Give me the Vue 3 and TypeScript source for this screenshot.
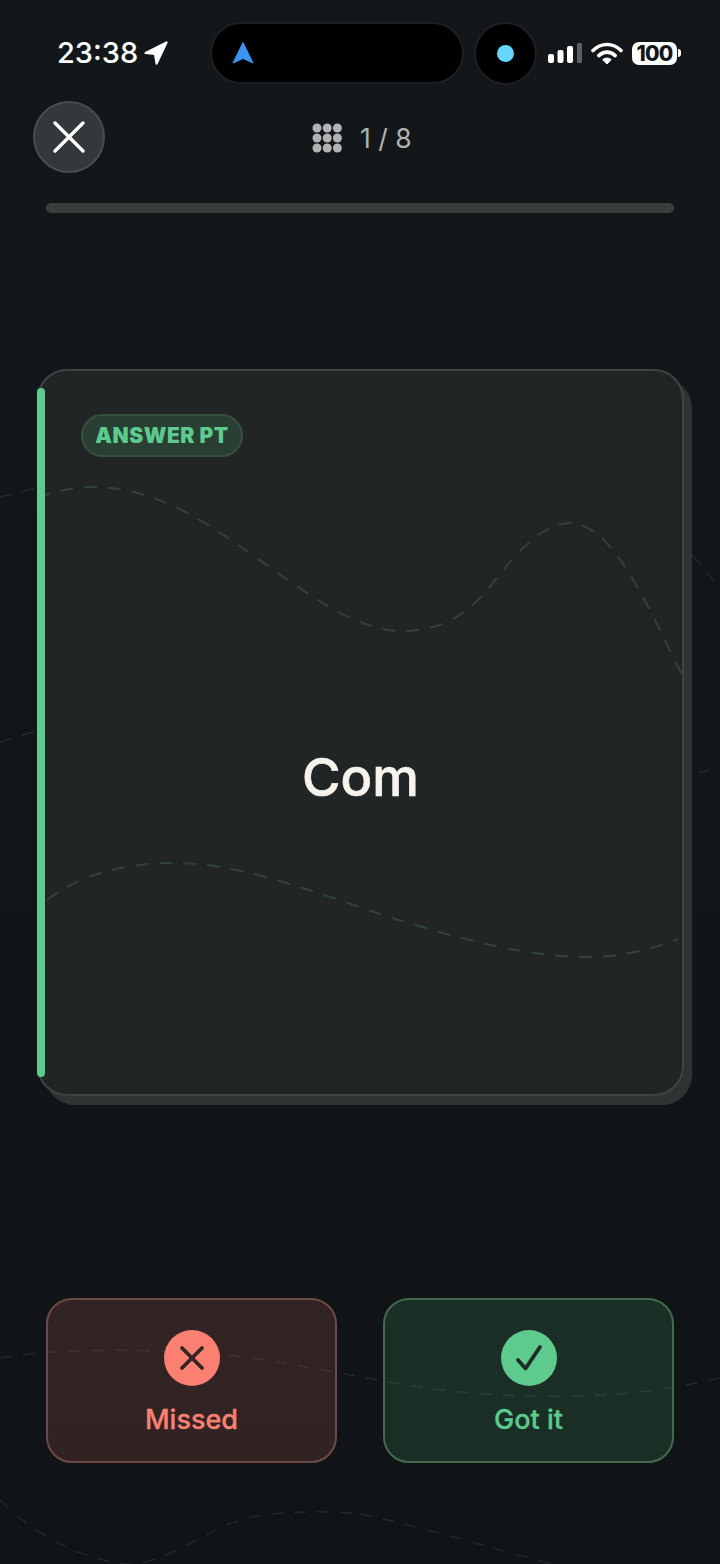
<script setup lang="ts">
import { ref } from "vue";

// dots of the little deck icon next to the counter
const dots = [0, 1, 2].flatMap((row) =>
  [0, 1, 2].map((col) => ({ id: `${row}-${col}`, cx: 5 + col * 10.2, cy: 5 + row * 10 }))
);

const current = ref(1);
const total = ref(8);
</script>

<template>
  <div class="page">
    <svg class="bg-lines" viewBox="0 0 720 1564" width="720" height="1564" fill="none">
      <path d="M0 497C14 494 26 490 40 488" />
      <path d="M692 555C702 565 711 577 720 590" />
      <path d="M0 742C12 738 25 734 38 731" />
      <path d="M698 773C705 771 712 769 720 768" />
      <path d="M0 1358C60 1348 130 1350 192 1352C260 1356 330 1372 400 1384C470 1396 560 1400 640 1392C670 1388 695 1384 720 1378" />
      <path d="M0 1500C40 1540 90 1562 130 1564C170 1562 205 1530 240 1520C270 1511 330 1510 360 1514" />
      <path d="M360 1514C420 1526 490 1548 552 1564" />
    </svg>

    <header class="status-bar">
      <div class="status-left">
        <span class="time">23:38</span>
        <svg class="loc-arrow" viewBox="0 0 24 24" width="24" height="24">
          <path d="M22.6 1.4 1.6 12 11 13 12.6 22.6Z" fill="#fff" stroke="#fff" stroke-width="2.2" stroke-linejoin="round" />
        </svg>
      </div>
      <div class="island">
        <svg viewBox="0 0 22 22" width="22" height="22">
          <path d="M11 0.5 21 21 11 16.5 1 21Z" fill="#3b94f0" stroke="#3b94f0" stroke-width="1" stroke-linejoin="round" />
        </svg>
      </div>
      <div class="island-dot"><span></span></div>
      <div class="status-right">
        <svg class="signal" viewBox="0 0 34 20" width="34" height="20">
          <rect x="0" y="11" width="6" height="9" rx="2" fill="#fff" />
          <rect x="9.5" y="7" width="6" height="13" rx="2" fill="#fff" />
          <rect x="19" y="3" width="6" height="17" rx="2" fill="#fff" />
          <rect x="29" y="0" width="5" height="20" rx="1.5" fill="#5d5f60" />
        </svg>
        <svg class="wifi" viewBox="0 0 32 24" width="32" height="24" fill="none">
          <path d="M2 9.5C10 1.5 22 1.5 30 9.5" stroke="#fff" stroke-width="3.6" stroke-linecap="round" />
          <path d="M7.8 14.6C12.6 10 19.4 10 24.2 14.6" stroke="#fff" stroke-width="3.6" stroke-linecap="round" />
          <path d="M16 23 11.8 18.6C14.2 16.6 17.8 16.6 20.2 18.6Z" fill="#fff" stroke="#fff" stroke-linejoin="round" />
        </svg>
        <div class="battery">
          <span class="battery-body">100</span>
          <span class="battery-nub"></span>
        </div>
      </div>
    </header>

    <div class="top-row">
      <button class="close-btn" type="button" aria-label="Close">
        <svg viewBox="0 0 34 34" width="34" height="34" fill="none">
          <path d="M3 3 31 31M31 3 3 31" stroke="#fff" stroke-width="3.4" stroke-linecap="round" />
        </svg>
      </button>
      <div class="counter">
        <svg viewBox="0 0 31 30" width="31" height="30">
          <circle v-for="d in dots" :key="d.id" :cx="d.cx" :cy="d.cy" r="4.5" fill="#b2b4b3" />
        </svg>
        <span>{{ current }} / {{ total }}</span>
      </div>
    </div>

    <div class="progress"></div>

    <section class="card">
      <svg class="card-lines" viewBox="0 0 647 727" width="647" height="727" fill="none">
        <path d="M0 128C20 122 38 118 55 118C100 118 140 135 185 165C250 208 310 262 365 262C405 262 430 245 450 221C470 197 500 154 533 154C575 154 610 235 646 308" />
        <path d="M10 531C50 500 100 494 138 494C200 494 270 520 340 544C420 570 490 588 550 588C585 588 615 580 641 570" />
      </svg>
      <span class="accent"></span>
      <span class="tag">ANSWER PT</span>
      <p class="word">Com</p>
    </section>

    <div class="actions">
      <button class="action missed" type="button">
        <span class="action-icon">
          <svg viewBox="0 0 26 26" width="26" height="26" fill="none">
            <path d="M3 3 23 23M23 3 3 23" stroke="#342423" stroke-width="3.8" stroke-linecap="round" />
          </svg>
        </span>
        <span class="action-label">Missed</span>
      </button>
      <button class="action got" type="button">
        <span class="action-icon">
          <svg viewBox="0 0 28 28" width="28" height="28" fill="none">
            <path d="M3 16 10.5 24.5 25 3" stroke="#1c2e27" stroke-width="3.8" stroke-linecap="round" stroke-linejoin="round" />
          </svg>
        </span>
        <span class="action-label">Got it</span>
      </button>
    </div>
  </div>
</template>

<style>
html,
body {
  background: #121619;
}
</style>

<style scoped>
.page {
  position: relative;
  width: 720px;
  height: 1564px;
  overflow: hidden;
  background: linear-gradient(#14171a, #101416);
  font-family: Inter, "Liberation Sans", sans-serif;
  display: flex;
  flex-direction: column;
}

.bg-lines {
  position: absolute;
  top: 0;
  left: 0;
}
.bg-lines path {
  stroke: #3a4543;
  stroke-opacity: 0.4;
  stroke-width: 1.5;
  stroke-dasharray: 12 11;
}

/* status bar */
.status-bar {
  position: relative;
  height: 84px;
  padding-top: 22px;
  box-sizing: border-box;
  display: flex;
  align-items: center;
}
.status-left {
  width: 210px;
  box-sizing: border-box;
  padding-left: 57px;
  display: flex;
  align-items: center;
  gap: 6px;
}
.time {
  color: #fff;
  font-size: 29px;
  font-weight: 500;
  line-height: 34px;
}
.island {
  width: 254px;
  height: 62px;
  box-sizing: border-box;
  border-radius: 31px;
  background: #000;
  border: 2px solid #1d2022;
  display: flex;
  align-items: center;
  padding-left: 20px;
}
.island-dot {
  width: 63px;
  height: 63px;
  margin-left: 10px;
  box-sizing: border-box;
  border-radius: 50%;
  background: #000;
  border: 2px solid #1d2022;
  display: flex;
  align-items: center;
  justify-content: center;
}
.island-dot span {
  width: 17px;
  height: 17px;
  border-radius: 50%;
  background: #66d7fb;
}
.status-right {
  margin-left: 11px;
  display: flex;
  align-items: center;
  gap: 9px;
}
.battery {
  display: flex;
  align-items: center;
  gap: 1px;
}
.battery-body {
  width: 45px;
  height: 23px;
  border-radius: 7px;
  background: #fff;
  color: #131619;
  font-size: 21px;
  font-weight: 800;
  line-height: 23px;
  text-align: center;
  letter-spacing: -0.8px;
}
.battery-nub {
  width: 3px;
  height: 8px;
  border-radius: 0 3px 3px 0;
  background: #fff;
}

/* top row */
.top-row {
  position: relative;
  margin-top: 17px;
  height: 72px;
  padding-left: 33px;
  display: flex;
  align-items: center;
}
.close-btn {
  width: 72px;
  height: 72px;
  padding: 0;
  border-radius: 50%;
  border: 2px solid #4a4d4f;
  background: #35383a;
  display: flex;
  align-items: center;
  justify-content: center;
}
.counter {
  margin-left: 207px;
  padding-top: 2px;
  display: flex;
  align-items: center;
  gap: 17px;
  color: #b0b2b1;
  font-size: 26.5px;
  line-height: 36px;
}

.progress {
  position: relative;
  margin: 30px 46px 0;
  height: 10px;
  border-radius: 5px;
  background: #3a3f3d;
}

/* answer card */
.card {
  position: relative;
  margin: 156px 0 0 37px;
  width: 647px;
  height: 727px;
  box-sizing: border-box;
  border: 2px solid #3f4442;
  border-radius: 30px;
  background: #212526;
  box-shadow: 8px 9px 0 #2f3333;
}
.card-lines {
  position: absolute;
  top: -2px;
  left: -2px;
}
.card-lines path {
  stroke: #31423e;
  stroke-width: 2;
  stroke-dasharray: 13 11;
}
.accent {
  position: absolute;
  left: -2px;
  top: 17px;
  width: 8px;
  height: 689px;
  border-radius: 4px;
  background: #5ccb8d;
}
.tag {
  position: absolute;
  left: 42px;
  top: 43px;
  height: 43px;
  box-sizing: border-box;
  width: 162px;
  border-radius: 22px;
  border: 2px solid #36503f;
  background: #2a3f34;
  color: #5ccb8d;
  font-size: 21px;
  font-weight: 900;
  line-height: 39px;
  letter-spacing: 0.5px;
  text-align: center;
  white-space: nowrap;
}
.word {
  position: absolute;
  left: 0;
  right: 0;
  top: 374px;
  margin: 0;
  color: #f5f3ec;
  font-size: 52.5px;
  font-weight: 500;
  -webkit-text-stroke: 0.7px #f5f3ec;
  line-height: 64px;
  text-align: center;
}

/* answer buttons */
.actions {
  position: relative;
  margin: 202px 46px 0;
  display: flex;
  gap: 46px;
}
.action {
  flex: 1;
  height: 165px;
  padding: 30px 0 0;
  box-sizing: border-box;
  border-radius: 26px;
  border-width: 2px;
  border-style: solid;
  font-family: inherit;
  display: flex;
  flex-direction: column;
  align-items: center;
}
.action-icon {
  width: 56px;
  height: 56px;
  border-radius: 50%;
  display: flex;
  align-items: center;
  justify-content: center;
}
.action-label {
  margin-top: 16px;
  font-size: 27px;
  font-weight: 500;
  -webkit-text-stroke: 0.35px currentColor;
  line-height: 36px;
}
.missed {
  background: rgba(251, 128, 114, 0.14);
  border-color: #6e4a47;
  color: #f98074;
}
.missed .action-icon {
  background: #fb8072;
}
.got {
  background: rgba(92, 203, 141, 0.14);
  border-color: #43694f;
  color: #5ccb8d;
}
.got .action-icon {
  background: #5ccb8d;
}
</style>
